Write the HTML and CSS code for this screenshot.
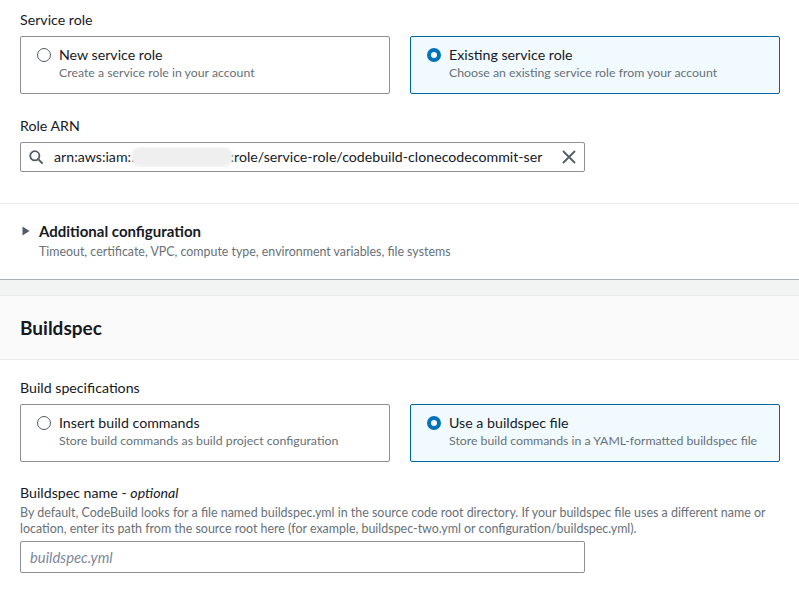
FILE: index.html
```html
<!DOCTYPE html>
<html lang="en">
<head>
<meta charset="utf-8">
<title>Buildspec</title>
<link rel="stylesheet" href="styles.css">
</head>
<body>
<div class="panel">
  <div class="section">
    <div class="label">Service role</div>
    <div class="tiles">
      <div class="tile">
        <span class="radio"></span>
        <div class="tile-text">
          <div class="tile-title">New service role</div>
          <div class="tile-desc">Create a service role in your account</div>
        </div>
      </div>
      <div class="tile selected">
        <span class="radio on"></span>
        <div class="tile-text">
          <div class="tile-title">Existing service role</div>
          <div class="tile-desc">Choose an existing service role from your account</div>
        </div>
      </div>
    </div>

    <div class="label label-gap">Role ARN</div>
    <div class="input search">
      <svg class="ico-search" width="14" height="14" viewBox="0 0 14 14"><circle cx="5.8" cy="5.8" r="4.6" fill="none" stroke="#545b64" stroke-width="1.8"/><path d="M9.2 9.2 L13 13" stroke="#545b64" stroke-width="1.9" stroke-linecap="round"/></svg>
      <span class="arn">arn:aws:iam:.<span class="blur"></span>:role/service-role/codebuild-clonecodecommit-ser</span>
      <svg class="ico-x" width="14" height="14" viewBox="0 0 14 14"><path d="M1.5 1.5 L12.5 12.5 M12.5 1.5 L1.5 12.5" stroke="#545b64" stroke-width="1.8" stroke-linecap="round"/></svg>
    </div>
  </div>

  <div class="expand">
    <div class="expand-head">
      <svg class="caret" width="8" height="10" viewBox="0 0 8 10"><path d="M0.5 0.5 L7.5 5 L0.5 9.5 Z" fill="#545b64"/></svg>
      <span class="expand-title">Additional configuration</span>
    </div>
    <div class="expand-desc">Timeout, certificate, VPC, compute type, environment variables, file systems</div>
  </div>
</div>

<div class="gap-band"></div>

<div class="panel panel2">
  <div class="panel-header"><h2>Buildspec</h2></div>
  <div class="section section2">
    <div class="label">Build specifications</div>
    <div class="tiles">
      <div class="tile">
        <span class="radio"></span>
        <div class="tile-text">
          <div class="tile-title">Insert build commands</div>
          <div class="tile-desc">Store build commands as build project configuration</div>
        </div>
      </div>
      <div class="tile selected">
        <span class="radio on"></span>
        <div class="tile-text">
          <div class="tile-title">Use a buildspec file</div>
          <div class="tile-desc">Store build commands in a YAML-formatted buildspec file</div>
        </div>
      </div>
    </div>

    <div class="label label-gap2">Buildspec name - <i>optional</i></div>
    <div class="field-desc">By default, CodeBuild looks for a file named buildspec.yml in the source code root directory. If your buildspec file uses a different name or location, enter its path from the source root here (for example, buildspec-two.yml or configuration/buildspec.yml).</div>
    <div class="input plain"><span class="placeholder">buildspec.yml</span></div>
  </div>
</div>
</body>
</html>
```
FILE: styles.css
```css
* { box-sizing: border-box; }
html, body { margin: 0; padding: 0; background: #ffffff; }
body {
  font-family: Lato, "Open Sans", sans-serif;
  color: #16191f;
  font-size: 14px;
  line-height: 20px;
  overflow: hidden;
}
.panel { background: #fff; }
.section { padding: 10px 20px 0 20px; }
.label { font-size: 14.2px; line-height: 20px; color: #16191f; margin-bottom: 6px; }
.label-gap { margin-top: 22px; }
.tiles { display: grid; grid-template-columns: 370px 370px; column-gap: 20px; }
.tile {
  display: flex;
  align-items: flex-start;
  gap: 8px;
  border: 1px solid #8d9096;
  border-radius: 2px;
  padding: 8px 12px 12px 16px;
  height: 58px;
  background: #fff;
}
.tile.selected { border-color: #00669e; background: #f1faff; }
.radio {
  flex: none;
  width: 14px; height: 14px;
  margin-top: 3px;
  border-radius: 50%;
  border: 1px solid #545b64;
  background: #fff;
}
.radio.on { border: 4.5px solid #0073bb; background: #fff; }
.tile-title { font-size: 14.2px; line-height: 20px; color: #16191f; }
.tile-desc { font-size: 12.3px; line-height: 16px; color: #687078; }
.input {
  width: 565px;
  height: 30px;
  border: 1px solid #8d9096;
  border-radius: 2px;
  display: flex;
  align-items: center;
  background: #fff;
}
.search { padding: 0 8px 0 8px; gap: 11px; }
.ico-search { flex: none; }
.arn { flex: 1; white-space: nowrap; overflow: hidden; font-size: 14.2px; color: #16191f; display: flex; align-items: center; }
.blur {
  display: inline-block;
  width: 102px; height: 20px;
  border-radius: 9px;
  background: #efefef;
  margin: 0 -2px 0 -4px;
  filter: blur(1.5px);
}
.ico-x { flex: none; margin-left: 8px; }
.expand {
  margin-top: 31px;
  border-top: 1px solid #e9ebed;
  border-bottom: 1px solid #aab2b8;
  padding: 17px 20px 19px 20px;
  box-shadow: 0 1px 1px rgba(0,28,36,0.25);
}
.expand-head { display: flex; align-items: center; gap: 9px; padding-left: 2px; }
.caret { flex: none; }
.expand-title { font-weight: 700; font-size: 15px; line-height: 20px; color: #16191f; }
.expand-desc { font-size: 12.4px; line-height: 16px; color: #687078; padding-left: 19px; margin-top: 3px; }
.gap-band { height: 15px; background: #f2f3f3; }
.panel-header {
  background: #fafafa;
  border-top: 1px solid #e9ebed;
  border-bottom: 1px solid #e9ebed;
  height: 65px;
  padding: 0 20px;
  display: flex;
  align-items: center;
}
.panel-header h2 { margin: 0; font-size: 19px; line-height: 22px; font-weight: 700; color: #16191f; }
.section2 { padding-top: 18px; }
.label-gap2 { margin-top: 21px; margin-bottom: 2px; }
.field-desc { font-size: 12.45px; line-height: 16px; color: #687078; margin-bottom: 4px; }
.plain { padding: 0 9px; height: 32px; }
.placeholder { font-style: italic; color: #7d8998; font-size: 14.8px; }
```
